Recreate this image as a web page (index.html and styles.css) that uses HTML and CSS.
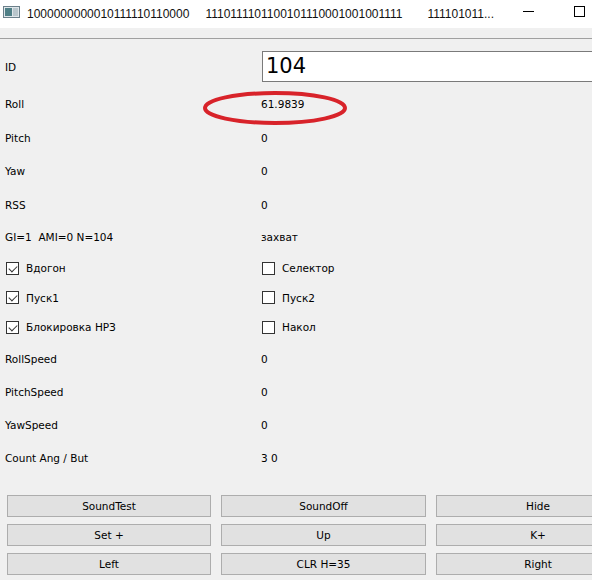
FILE: index.html
```html
<!DOCTYPE html>
<html>
<head>
<meta charset="utf-8">
<link rel="stylesheet" href="styles.css">
</head>
<body>
<div class="window">
  <div class="titlebar">
    <svg class="appicon" width="17" height="12" viewBox="0 0 17 12">
      <rect x="0.5" y="0.5" width="16" height="11" fill="#dfe6ea" stroke="#6b7f8a"/>
      <rect x="2" y="2" width="7" height="8" fill="#4f7f86"/>
      <rect x="10" y="2" width="5" height="8" fill="#b9c6cc"/>
    </svg>
    <span class="t1">1000000000010111110110000</span>
    <span class="t2">1110111101100101110001001001111</span>
    <span class="t3">111101011...</span>
    <span class="winbtns">
      <span class="minbtn"></span>
      <span class="maxbtn"></span>
    </span>
  </div>
  <div class="menustrip"></div>
  <div class="content">
    <div class="form">
      <div class="row r-id"><span class="lbl">ID</span><div class="idbox">104</div></div>
      <div class="row r35"><span class="lbl">Roll</span><span class="val">61.9839</span></div>
      <div class="row r33"><span class="lbl">Pitch</span><span class="val">0</span></div>
      <div class="row r34"><span class="lbl">Yaw</span><span class="val">0</span></div>
      <div class="row r33"><span class="lbl">RSS</span><span class="val">0</span></div>
      <div class="row r32"><span class="lbl">GI=1&nbsp; AMI=0 N=104</span><span class="val">захват</span></div>
      <div class="row r30">
        <span class="lbl chk"><span class="box on"></span>Вдогон</span>
        <span class="val chk"><span class="box"></span>Селектор</span>
      </div>
      <div class="row r29">
        <span class="lbl chk"><span class="box on"></span>Пуск1</span>
        <span class="val chk"><span class="box"></span>Пуск2</span>
      </div>
      <div class="row r30">
        <span class="lbl chk"><span class="box on"></span>Блокировка НРЗ</span>
        <span class="val chk"><span class="box"></span>Накол</span>
      </div>
      <div class="row r33"><span class="lbl">RollSpeed</span><span class="val">0</span></div>
      <div class="row r33"><span class="lbl">PitchSpeed</span><span class="val">0</span></div>
      <div class="row r33"><span class="lbl">YawSpeed</span><span class="val">0</span></div>
      <div class="row r34"><span class="lbl">Count Ang / But</span><span class="val">3 0</span></div>
    </div>
    <div class="buttons">
      <div class="btn">SoundTest</div>
      <div class="btn">SoundOff</div>
      <div class="btn">Hide</div>
      <div class="btn">Set +</div>
      <div class="btn">Up</div>
      <div class="btn">K+</div>
      <div class="btn">Left</div>
      <div class="btn">CLR H=35</div>
      <div class="btn">Right</div>
    </div>
    <svg class="mark" width="150" height="38" viewBox="0 0 150 38">
      <ellipse cx="74" cy="18" rx="70" ry="15" fill="none" stroke="#d8232a" stroke-width="4"/>
    </svg>
  </div>
</div>
</body>
</html>
```

FILE: styles.css
```css
html, body {
  margin: 0;
  padding: 0;
  background: #f0f0f0;
  overflow: hidden;
}
body {
  width: 592px;
  height: 580px;
}
.window {
  width: 592px;
  height: 580px;
  overflow: hidden;
  font-family: "DejaVu Sans", "Liberation Sans", sans-serif;
  font-size: 10.5px;
  color: #000;
}
.titlebar {
  height: 28px;
  background: #fff;
  display: flex;
  align-items: center;
  font-family: "Liberation Sans", "DejaVu Sans", sans-serif;
  font-size: 12px;
  color: #111;
  position: relative;
  white-space: nowrap;
}
.appicon {
  margin-left: 3px;
  margin-top: -4px;
  flex: none;
}
.t1 { margin-left: 7px; }
.t2 { margin-left: 16px; }
.t3 { margin-left: 25px; }
.winbtns {
  position: absolute;
  right: 0;
  top: 0;
  height: 28px;
  width: 90px;
  background: #fff;
}
.minbtn {
  position: absolute;
  left: 21px;
  top: 11px;
  width: 11px;
  height: 1px;
  background: #000;
}
.maxbtn {
  position: absolute;
  left: 72px;
  top: 6px;
  width: 9px;
  height: 9px;
  border: 1px solid #000;
}
.menustrip {
  height: 10px;
  background: #f0f0f0;
  border-bottom: 1px solid #a0a0a0;
}
.content {
  position: relative;
  padding-top: 9px;
  width: 660px;
}
.form {
  display: flex;
  flex-direction: column;
}
.row {
  display: flex;
  align-items: center;
}
.r-id { height: 38px; }
.r35 { height: 35px; }
.r34 { height: 34px; }
.r33 { height: 33px; }
.r32 { height: 32px; }
.r30 { height: 30px; }
.r29 { height: 29px; }
.lbl {
  width: 256px;
  padding-left: 5px;
  flex: none;
}
.val {
  flex: none;
}
.chk {
  display: flex;
  align-items: center;
}
.lbl.chk { padding-left: 6px; width: 255px; }
.val.chk { padding-left: 1px; }
.box {
  width: 11px;
  height: 11px;
  border: 1px solid #333;
  background: #fff;
  margin-right: 7px;
  position: relative;
  flex: none;
}
.box.on::after {
  content: "";
  position: absolute;
  left: 2px;
  top: 1px;
  width: 7px;
  height: 4px;
  border-left: 1px solid #333;
  border-bottom: 1px solid #333;
  transform: rotate(-45deg) translate(-1px, 1px);
}
.idbox {
  width: 360px;
  height: 29px;
  margin-top: -1px;
  border: 1px solid #7a7a7a;
  background: #fff;
  font-size: 21px;
  line-height: 29px;
  padding-left: 3px;
  margin-left: 1px;
}
.buttons {
  display: grid;
  grid-template-columns: 204px 205px 204px;
  grid-auto-rows: 22px;
  column-gap: 10px;
  row-gap: 7px;
  margin-top: 20px;
  margin-left: 7px;
}
.btn {
  background: #e1e1e1;
  border: 1px solid #adadad;
  display: flex;
  align-items: center;
  justify-content: center;
  font-size: 10.5px;
}
.mark {
  position: absolute;
  left: 201px;
  top: 51px;
}
```
